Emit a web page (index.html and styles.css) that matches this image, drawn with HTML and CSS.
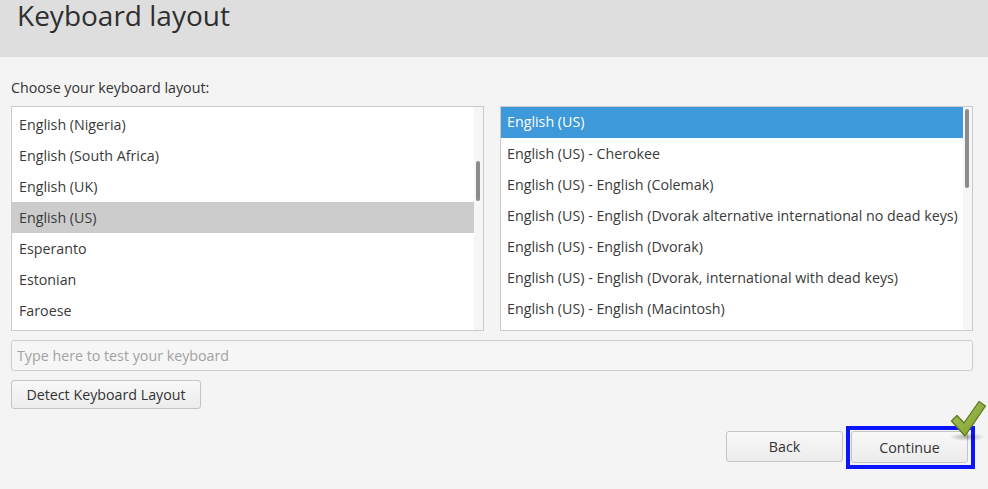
FILE: index.html
```html
<!DOCTYPE html>
<html>
<head>
<meta charset="utf-8">
<link rel="stylesheet" href="styles.css">
</head>
<body>
<header class="header"><h1 class="title">Keyboard layout</h1></header>
<main class="main">
  <div class="label">Choose your keyboard layout:</div>
  <div class="lists">
    <div class="list list-left">
      <ul class="items">
        <li class="item">English (Nigeria)</li>
        <li class="item">English (South Africa)</li>
        <li class="item">English (UK)</li>
        <li class="item sel-gray">English (US)</li>
        <li class="item">Esperanto</li>
        <li class="item">Estonian</li>
        <li class="item">Faroese</li>
      </ul>
      <div class="track"><div class="thumb thumb-left"></div></div>
    </div>
    <div class="list list-right">
      <ul class="items">
        <li class="item sel-blue">English (US)</li>
        <li class="item">English (US) - Cherokee</li>
        <li class="item">English (US) - English (Colemak)</li>
        <li class="item">English (US) - English (Dvorak alternative international no dead keys)</li>
        <li class="item">English (US) - English (Dvorak)</li>
        <li class="item">English (US) - English (Dvorak, international with dead keys)</li>
        <li class="item">English (US) - English (Macintosh)</li>
      </ul>
      <div class="track"><div class="thumb thumb-right"></div></div>
    </div>
  </div>
  <input class="test-input" type="text" placeholder="Type here to test your keyboard">
  <div class="detect-row"><button class="btn detect">Detect Keyboard Layout</button></div>
  <div class="nav">
    <button class="btn nav-btn">Back</button>
    <div class="continue-wrap">
      <button class="btn nav-btn continue">Continue</button>
      <svg class="check" width="40" height="42" viewBox="0 0 40 42">
        <defs>
          <linearGradient id="cg" x1="0" y1="0" x2="1" y2="1">
            <stop offset="0" stop-color="#a9c55c"/>
            <stop offset="1" stop-color="#7c9b2e"/>
          </linearGradient>
          <radialGradient id="sh" cx="0.5" cy="0.5" r="0.5">
            <stop offset="0" stop-color="#000" stop-opacity="0.3"/>
            <stop offset="1" stop-color="#000" stop-opacity="0"/>
          </radialGradient>
        </defs>
        <ellipse cx="18" cy="37" rx="18" ry="4" fill="url(#sh)"/>
        <polygon points="2.5,21 8,15.5 15,23 30,1.5 36.5,6 16,36" fill="url(#cg)" stroke="#5c7a1e" stroke-width="1.3" stroke-linejoin="round"/>
      </svg>
    </div>
  </div>
</main>
</body>
</html>
```
FILE: styles.css
```css
* { box-sizing: border-box; }
html, body { margin: 0; padding: 0; }
body {
  width: 988px;
  height: 489px;
  overflow: hidden;
  background: #f4f4f4;
  font-family: "Open Sans", "Noto Sans", sans-serif;
  font-size: 14.25px;
  color: #3a3a3a;
}
.header {
  height: 57px;
  background: #dedede;
  padding-left: 17px;
}
.title {
  margin: 0;
  font-weight: 400;
  font-size: 28px;
  line-height: 31px;
  color: #2f2f2f;
}
.main {
  padding: 0 15px 0 11px;
}
.label {
  margin-top: 21px;
  line-height: 20px;
  height: 20px;
  color: #333;
}
.lists {
  margin-top: 8px;
  display: grid;
  grid-template-columns: 1fr 1fr;
  column-gap: 16px;
}
.list {
  height: 225px;
  border: 1px solid #cbcbcb;
  background: #fff;
  display: flex;
  overflow: hidden;
}
.items {
  list-style: none;
  margin: 0;
  padding: 0;
  flex: 1;
  min-width: 0;
}
.list-left .items { padding-top: 2px; }
.item {
  height: 31px;
  line-height: 31px;
  padding-left: 7px;
  white-space: nowrap;
  color: #3a3a3a;
}
.list-right .item { padding-left: 6px; }
.sel-gray { background: #cccccc; }
.sel-blue { background: #3d99d9; color: #fff; line-height: 30px; }
.track {
  width: 9px;
  background: #f6f6f6;
  position: relative;
}
.thumb {
  position: absolute;
  left: 2px;
  width: 4px;
  border-radius: 2px;
  background: #8c8c8c;
}
.thumb-left { top: 54px; height: 40px; }
.thumb-right { top: 2px; height: 79px; }
.test-input {
  display: block;
  margin-top: 9px;
  width: 962px;
  height: 31px;
  border: 1px solid #cdcdcd;
  border-radius: 3px;
  background: #f6f6f6;
  padding: 0 5px;
  font-family: inherit;
  font-size: 14.25px;
  color: #333;
}
.test-input::placeholder { color: #a2a2a2; }
.detect-row { margin-top: 9px; }
.btn {
  font-family: inherit;
  font-size: 14.25px;
  color: #333;
  border: 1px solid #c4c4c4;
  border-radius: 3px;
  background: linear-gradient(#f8f8f8, #ececec);
  padding: 0;
}
.detect { width: 190px; height: 29px; }
.nav {
  margin-top: 22px;
  display: flex;
  justify-content: flex-end;
  gap: 8px;
  padding-right: 5px;
}
.nav-btn { width: 117px; height: 31px; }
.continue-wrap { position: relative; }
.continue-wrap::after {
  content: "";
  position: absolute;
  left: -5px;
  top: -5px;
  right: -7px;
  bottom: -6px;
  border: 4px solid #0a14ff;
  pointer-events: none;
}
.continue {
  display: block;
  height: 32px;
}
.check {
  position: absolute;
  left: 98px;
  top: -31px;
  z-index: 1;
}
```
